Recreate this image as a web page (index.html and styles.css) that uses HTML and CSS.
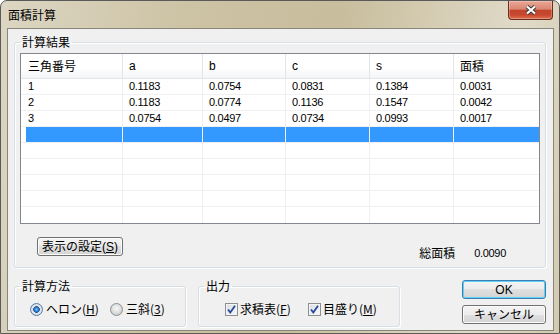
FILE: index.html
```html
<!DOCTYPE html>
<html lang="ja">

<head>
  <meta charset="UTF-8" />
  <title>面積計算</title>
  <link rel="stylesheet" href="styles.css">
</head>

<body>
  <div class="window">
    <div class="titlebar">
      <div class="title">面積計算</div>
      <div class="close">
        <svg width="14" height="12" viewBox="0 0 14 12">
          <path d="M3 2.5 L11 9.5 M11 2.5 L3 9.5" stroke="#3a3a3a" stroke-width="4.2" />
          <path d="M3 2.5 L11 9.5 M11 2.5 L3 9.5" stroke="#fff" stroke-width="2.2" />
        </svg>
      </div>
    </div>

    <div class="client">
      <fieldset class="group result-group">
        <legend>計算結果</legend>
        <div class="list">
          <div class="row head">
            <div class="cell">三角番号</div>
            <div class="cell num">a</div>
            <div class="cell num">b</div>
            <div class="cell num">c</div>
            <div class="cell num">s</div>
            <div class="cell">面積</div>
          </div>
          <div class="row">
            <div class="cell num">1</div>
            <div class="cell num">0.1183</div>
            <div class="cell num">0.0754</div>
            <div class="cell num">0.0831</div>
            <div class="cell num">0.1384</div>
            <div class="cell num">0.0031</div>
          </div>
          <div class="row">
            <div class="cell num">2</div>
            <div class="cell num">0.1183</div>
            <div class="cell num">0.0774</div>
            <div class="cell num">0.1136</div>
            <div class="cell num">0.1547</div>
            <div class="cell num">0.0042</div>
          </div>
          <div class="row">
            <div class="cell num">3</div>
            <div class="cell num">0.0754</div>
            <div class="cell num">0.0497</div>
            <div class="cell num">0.0734</div>
            <div class="cell num">0.0993</div>
            <div class="cell num">0.0017</div>
          </div>
          <div class="row selected">
            <div class="cell"></div><div class="cell"></div><div class="cell"></div>
            <div class="cell"></div><div class="cell"></div><div class="cell"></div>
          </div>
          <div class="row">
            <div class="cell"></div><div class="cell"></div><div class="cell"></div>
            <div class="cell"></div><div class="cell"></div><div class="cell"></div>
          </div>
          <div class="row">
            <div class="cell"></div><div class="cell"></div><div class="cell"></div>
            <div class="cell"></div><div class="cell"></div><div class="cell"></div>
          </div>
          <div class="row">
            <div class="cell"></div><div class="cell"></div><div class="cell"></div>
            <div class="cell"></div><div class="cell"></div><div class="cell"></div>
          </div>
          <div class="row">
            <div class="cell"></div><div class="cell"></div><div class="cell"></div>
            <div class="cell"></div><div class="cell"></div><div class="cell"></div>
          </div>
          <div class="row">
            <div class="cell"></div><div class="cell"></div><div class="cell"></div>
            <div class="cell"></div><div class="cell"></div><div class="cell"></div>
          </div>
        </div>

        <div class="result-foot">
          <button class="button show-button">表示の設定(<u>S</u>)</button>
          <div class="total">
            <span>総面積</span>
            <span class="num">0.0090</span>
          </div>
        </div>
      </fieldset>

      <div class="bottom">
        <fieldset class="group method">
          <legend>計算方法</legend>
          <div class="options method-options">
            <label class="option"><span class="radio checked"></span><span>ヘロン(<u>H</u>)</span></label>
            <label class="option"><span class="radio"></span><span>三斜(<u>3</u>)</span></label>
          </div>
        </fieldset>

        <fieldset class="group output">
          <legend>出力</legend>
          <div class="options output-options">
            <label class="option">
              <span class="check">
                <svg width="11" height="11" viewBox="0 0 11 11">
                  <path d="M2 5.5 L4.3 8.5 L9 1.8" fill="none" stroke="#27489a" stroke-width="1.8" />
                </svg>
              </span>
              <span>求積表(<u>F</u>)</span>
            </label>
            <label class="option">
              <span class="check">
                <svg width="11" height="11" viewBox="0 0 11 11">
                  <path d="M2 5.5 L4.3 8.5 L9 1.8" fill="none" stroke="#27489a" stroke-width="1.8" />
                </svg>
              </span>
              <span>目盛り(<u>M</u>)</span>
            </label>
          </div>
        </fieldset>

        <div class="actions">
          <button class="button default">OK</button>
          <button class="button">キャンセル</button>
        </div>
      </div>
    </div>
  </div>
</body>

</html>
```

FILE: styles.css
```css
body {
  margin: 0;
  font-family: "Liberation Sans", "Noto Sans CJK JP", sans-serif;
  font-size: 12px;
  color: #000;
  background: #fff;
}

.window {
  width: 560px;
  height: 334px;
  box-sizing: border-box;
  display: flex;
  flex-direction: column;
  border: 1px solid #5a5a5a;
  border-radius: 7px 7px 0 0;
  background: linear-gradient(100deg, #dcd6c3 0%, #cdc3a5 30%, #c8bd9c 55%, #e0dac8 85%, #d3caae 100%);
}

.titlebar {
  height: 27px;
  display: flex;
  justify-content: space-between;
  align-items: flex-start;
}

.title {
  padding: 5px 0 0 7px;
  line-height: 17px;
  font-family: "Noto Sans CJK JP", sans-serif;
}

.close {
  width: 45px;
  height: 19px;
  box-sizing: border-box;
  margin-right: 6px;
  display: flex;
  align-items: center;
  justify-content: center;
  border: 1px solid #6e2b20;
  border-top: none;
  border-radius: 0 0 4px 4px;
  background: linear-gradient(#e9a897 0%, #da8672 45%, #c2442d 52%, #c9472f 78%, #dd7350 100%);
  box-shadow: inset 0 0 0 1px rgba(255, 255, 255, 0.25);
}

.client {
  flex: 1;
  margin: 0 5px 2px 6px;
  border: 1px solid #8a857a;
  background: #f0f0f0;
}

.group {
  margin: 0;
  border: 1px solid #d5dfe5;
  border-radius: 3px;
  box-shadow: inset 1px 1px 0 #fff, 1px 1px 0 #fff;
  box-sizing: border-box;
}

.group legend {
  padding: 0 2px;
  line-height: 14px;
  font-family: "Noto Sans CJK JP", sans-serif;
}

.result-group {
  margin: 6px 0 0 6px;
  width: 532px;
  padding: 4px 5px 7px;
}

.list {
  border: 1px solid #828790;
  background: #fff;
}

.row {
  display: grid;
  grid-template-columns: 102px 80px 83px 84px 84px 85px;
  height: 16px;
  box-sizing: border-box;
  border-bottom: 1px solid #f0f0f0;
}

.row:last-child {
  border-bottom: none;
}

.cell {
  padding-left: 6px;
  line-height: 15px;
  border-right: 1px solid #f0f0f0;
  white-space: nowrap;
  overflow: hidden;
  font-family: "Noto Sans CJK JP", sans-serif;
}

.cell:first-child {
  padding-left: 7px;
}

.cell:last-child {
  border-right: none;
}

.num {
  font-family: "Liberation Sans", sans-serif;
  font-size: 11px;
  letter-spacing: -0.3px;
}

.row.head {
  height: 25px;
  background: linear-gradient(#fff 55%, #f4f5f7);
  border-bottom: 1px solid #e5e5e5;
}

.head .cell {
  line-height: 24px;
  border-right-color: #e3e4e6;
}

.head .cell.num {
  font-size: 12px;
}

.row.selected .cell {
  background: #3399ff;
}

.row.selected .cell:first-child {
  background: linear-gradient(to right, #fff 5px, #3399ff 5px);
}

.result-foot {
  display: flex;
  align-items: flex-start;
  margin-top: 13px;
}

.button {
  height: 19px;
  box-sizing: border-box;
  padding: 0 4px;
  font-family: "Liberation Sans", "Noto Sans CJK JP", sans-serif;
  font-size: 12px;
  font-weight: 400;
  line-height: 16px;
  color: #000;
  border: 1px solid #707070;
  border-radius: 3px;
  background: linear-gradient(#f4f4f4 0%, #ececec 50%, #e0e0e0 50%, #d4d4d4 100%);
  box-shadow: inset 0 0 0 1px #fcfcfc;
}

.show-button {
  width: 86px;
  margin-left: 17px;
  padding: 0;
}

.total {
  margin: 9px 34px 0 auto;
  display: flex;
  gap: 19px;
  line-height: 14px;
  font-family: "Noto Sans CJK JP", sans-serif;
}

.bottom {
  display: flex;
  align-items: flex-start;
  margin-top: 11px;
  padding-left: 6px;
}

.method,
.output {
  padding: 8px 5px 9px;
}

.method {
  width: 172px;
}

.output {
  width: 202px;
  margin-left: 12px;
}

.options {
  display: grid;
  align-items: center;
  height: 16px;
}

.method-options {
  grid-template-columns: 80px auto;
  padding-left: 10px;
}

.output-options {
  grid-template-columns: 83px auto;
  padding-left: 21px;
}

.option {
  display: flex;
  align-items: center;
  gap: 3px;
  line-height: 16px;
  white-space: nowrap;
  font-family: "Noto Sans CJK JP", sans-serif;
}

.output-options .option {
  gap: 2px;
}

.radio {
  width: 13px;
  height: 13px;
  box-sizing: border-box;
  border: 1px solid #8e8f8f;
  border-radius: 50%;
  background: radial-gradient(circle at 50% 40%, #f7f7f7 0, #e0e0e0 4px, #d0d0d0 6px);
}

.radio.checked {
  border-color: #5a7da3;
  background: radial-gradient(circle at 50% 50%, #7ec4f5 0, #2a7fd4 2px, #1a4f94 3px, #dfe6ee 3.6px, #d6dbe2 6px);
}

.check {
  width: 13px;
  height: 13px;
  box-sizing: border-box;
  display: flex;
  align-items: center;
  justify-content: center;
  border: 1px solid #8e8f8f;
  background: linear-gradient(135deg, #d8dce2, #f8f9fa);
  box-shadow: inset 0 0 0 1px #f4f4f4;
}

.actions {
  margin: 1px 7px 0 auto;
  display: flex;
  flex-direction: column;
  gap: 6px;
}

.actions .button {
  width: 84px;
}

.button.default {
  border-color: #3c7fb1;
  box-shadow: inset 0 0 0 1px #5fd0f6;
}
```
